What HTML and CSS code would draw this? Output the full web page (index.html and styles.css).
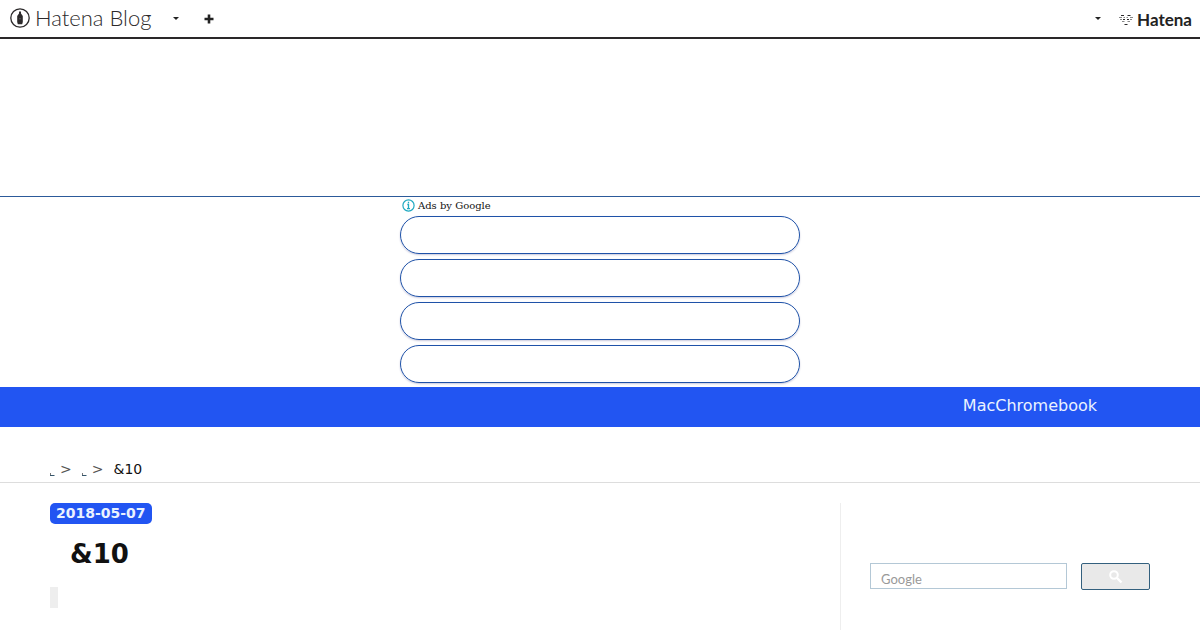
FILE: index.html
```html
<!DOCTYPE html>
<html lang="ja">
<head>
    <meta charset="UTF-8">
    <meta name="viewport" content="width=device-width, initial-scale=1.0">
    <title>&amp;10</title>
    <link rel="stylesheet" href="styles.css">
</head>
<body>
    <header class="globalheader">
        <a href="#" class="blog-logo">
            <svg class="blog-mark" width="20" height="20" viewBox="0 0 20 20">
                <circle cx="10" cy="10" r="9.2" fill="none" stroke="#2c2a2b" stroke-width="1.3"/>
                <path d="M9 3.5 H11 V5.500 L12.8 8 V14 L12.2 16.200 H7.8 L7.2 14 V8 L9 5.500 Z" fill="#2c2a2b"/>
                <circle cx="10" cy="10.8" r="0.5" fill="#aaa"/>
            </svg>
            <span>Hatena Blog</span>
        </a>
        <button type="button" class="menu-button" aria-label="Blog menu"><span class="caret"></span></button>
        <button type="button" class="plus-button" aria-label="New entry">
            <svg width="10" height="10" viewBox="0 0 10 10"><path d="M5 0.500 V9.500 M0.500 5 H9.500" stroke="#222" stroke-width="2.600"/></svg>
        </button>
        <button type="button" class="menu-button menu-right" aria-label="Account menu"><span class="caret"></span></button>
        <a href="#" class="hatena-logo">
            <svg width="16" height="12" viewBox="0 0 16 12">
                <path d="M3 1.500 H6 M9.500 1.500 H12.500 M5 5.500 H7 M9 5.500 H11 M6.500 10.500 H9.500" fill="none" stroke="#2c2a2b" stroke-width="1.200"/>
                <path d="M1 3.500 H4 M5.500 3.500 H7 M8.500 3.500 H10 M12 3.500 H15 M2 5.500 H4 M12 5.500 H14 M4 7.500 H6.500 M9.500 7.500 H12" fill="none" stroke="#888" stroke-width="1"/>
            </svg>
            <span>Hatena</span>
        </a>
    </header>

    <div class="blog-title"></div>

    <section class="ads">
        <p class="ads-label">
            <svg width="13" height="13" viewBox="0 0 13 13">
                <circle cx="6.500" cy="6.500" r="5.600" fill="none" stroke="#1fa9c0" stroke-width="1.200"/>
                <path d="M6.500 2.800 V4.300 M5.300 5.500 H6.500 V9.500 M5 9.600 H8" fill="none" stroke="#1fa9c0" stroke-width="1.300"/>
            </svg>
            Ads by Google
        </p>
        <div class="ad-list">
            <a href="#" class="ad-link" aria-label="Ad"></a>
            <a href="#" class="ad-link" aria-label="Ad"></a>
            <a href="#" class="ad-link" aria-label="Ad"></a>
            <a href="#" class="ad-link" aria-label="Ad"></a>
        </div>
    </section>

    <nav class="menu">
        <a href="#">MacChromebook</a>
    </nav>

    <nav class="breadcrumb">
        <a href="#" class="crumb" aria-label="Top"><svg width="5" height="4" viewBox="0 0 5 4"><path d="M0.500 1 V3" stroke="#777"/><path d="M0 3.500 H4.500" stroke="#35566c"/></svg></a>
        <span class="gt">&gt;</span>
        <a href="#" class="crumb" aria-label="Category"><svg width="5" height="4" viewBox="0 0 5 4"><path d="M0.500 1 V3" stroke="#777"/><path d="M0 3.500 H4.500" stroke="#35566c"/></svg></a>
        <span class="gt">&gt;</span>
        <span class="current">&amp;10</span>
    </nav>

    <div class="content">
        <main class="entry">
            <a href="#" class="date"><time datetime="2018-05-07">2018-05-07</time></a>
            <h1 class="entry-title">&amp;10</h1>
            <a href="#" class="category" aria-label="Category"></a>
        </main>
        <aside class="sidebar">
            <form class="search">
                <input type="text" class="search-box" placeholder="Google" aria-label="Google">
                <button type="button" class="search-button" aria-label="Search">
                    <svg width="14" height="14" viewBox="0 0 14 14">
                        <circle cx="5" cy="5" r="3.800" fill="none" stroke="#fff" stroke-width="2"/>
                        <path d="M8 8 L12.500 12.500" stroke="#fff" stroke-width="2.400"/>
                    </svg>
                </button>
            </form>
        </aside>
    </div>
</body>
</html>
```

FILE: styles.css
```css
* {
    box-sizing: border-box;
}
body {
    margin: 0;
    background-color: #fff;
    color: #111;
    font-family: "DejaVu Sans", sans-serif;
    font-size: 14px;
}
a {
    color: inherit;
    text-decoration: none;
}
svg {
    display: block;
}
button {
    padding: 0;
    border: 0;
    background: none;
}

/* header */
.globalheader {
    display: flex;
    align-items: center;
    height: 39px;
    padding: 0 8px 0 10px;
    border-bottom: 2px solid #2a2829;
}
.blog-logo {
    display: flex;
    align-items: center;
    gap: 5px;
    padding-bottom: 2px;
    color: #2c2a2b;
    font-family: Lato, sans-serif;
    font-size: 22px;
    font-weight: 300;
    line-height: 24px;
}
.menu-button {
    display: flex;
    justify-content: center;
    width: 16px;
    margin-left: 17px;
}
.caret {
    border: 3px solid transparent;
    border-top-color: #222;
    border-bottom: 0;
}
.plus-button {
    margin-left: 20px;
}
.menu-right {
    margin-left: auto;
}
.hatena-logo {
    display: flex;
    align-items: center;
    gap: 3px;
    margin: 2px 0 0 12px;
    color: #222;
    font-family: Lato, sans-serif;
    font-size: 17px;
    font-weight: 700;
    line-height: 20px;
}

.blog-title {
    height: 158px;
    border-bottom: 1px solid #2c5a9a;
}

/* ads */
.ads {
    max-width: 400px;
    margin: 0 auto;
    padding: 2px 0 4px;
}
.ads-label {
    display: flex;
    align-items: center;
    gap: 3px;
    margin: 0 0 4px;
    padding-left: 2px;
    color: #111;
    font-family: "DejaVu Serif", serif;
    font-size: 10px;
    line-height: 13px;
}
.ad-list {
    display: grid;
    gap: 5px;
}
.ad-link {
    height: 38px;
    border: 1px solid #1f52a8;
    border-radius: 19px;
    box-shadow: 0 1px 2px #c8c8dc;
}

/* menu */
.menu {
    display: flex;
    justify-content: flex-end;
    height: 40px;
    padding: 0 103px 0 50px;
    background-color: #2255f2;
    color: #eaf2ff;
    font-size: 16px;
    line-height: 38px;
}

/* breadcrumb */
.breadcrumb {
    display: flex;
    align-items: baseline;
    padding: 32px 50px 3px;
    border-bottom: 1px solid #ddd;
    line-height: 20px;
}
.crumb {
    align-self: flex-end;
    width: 5px;
    padding-bottom: 3px;
}
.gt {
    padding: 0 10px 0 5px;
    color: #555;
}
.current {
    color: #111;
}

/* entry and sidebar */
.content {
    display: grid;
    grid-template-columns: 1fr 310px;
    padding: 20px 50px 0;
}
.entry {
    display: flex;
    flex-direction: column;
    align-items: flex-start;
}
.date {
    padding: 0 6px;
    border-radius: 5px;
    background-color: #2255f2;
    color: #eaf2ff;
    font-size: 14px;
    font-weight: bold;
    line-height: 21px;
}
.entry-title {
    margin: 15px 0 17px;
    padding-left: 20px;
    font-size: 26px;
    font-weight: bold;
    line-height: 31px;
}
.category {
    width: 8px;
    height: 21px;
    background-color: #eee;
}
.sidebar {
    min-height: 127px;
    padding: 60px 0 0 29px;
    border-left: 1px solid #eee;
}
.search {
    display: flex;
    gap: 14px;
}
.search-box {
    flex: 1;
    min-width: 0;
    height: 26px;
    padding: 6px 10px 0;
    border: 1px solid #b4c8d6;
    font-family: Lato, sans-serif;
    font-size: 13px;
}
.search-box::placeholder {
    color: #999;
}
.search-button {
    display: flex;
    align-items: center;
    justify-content: center;
    width: 69px;
    height: 27px;
    border: 1px solid #33607e;
    border-radius: 2px;
    background-color: #e9e9e9;
}
```
